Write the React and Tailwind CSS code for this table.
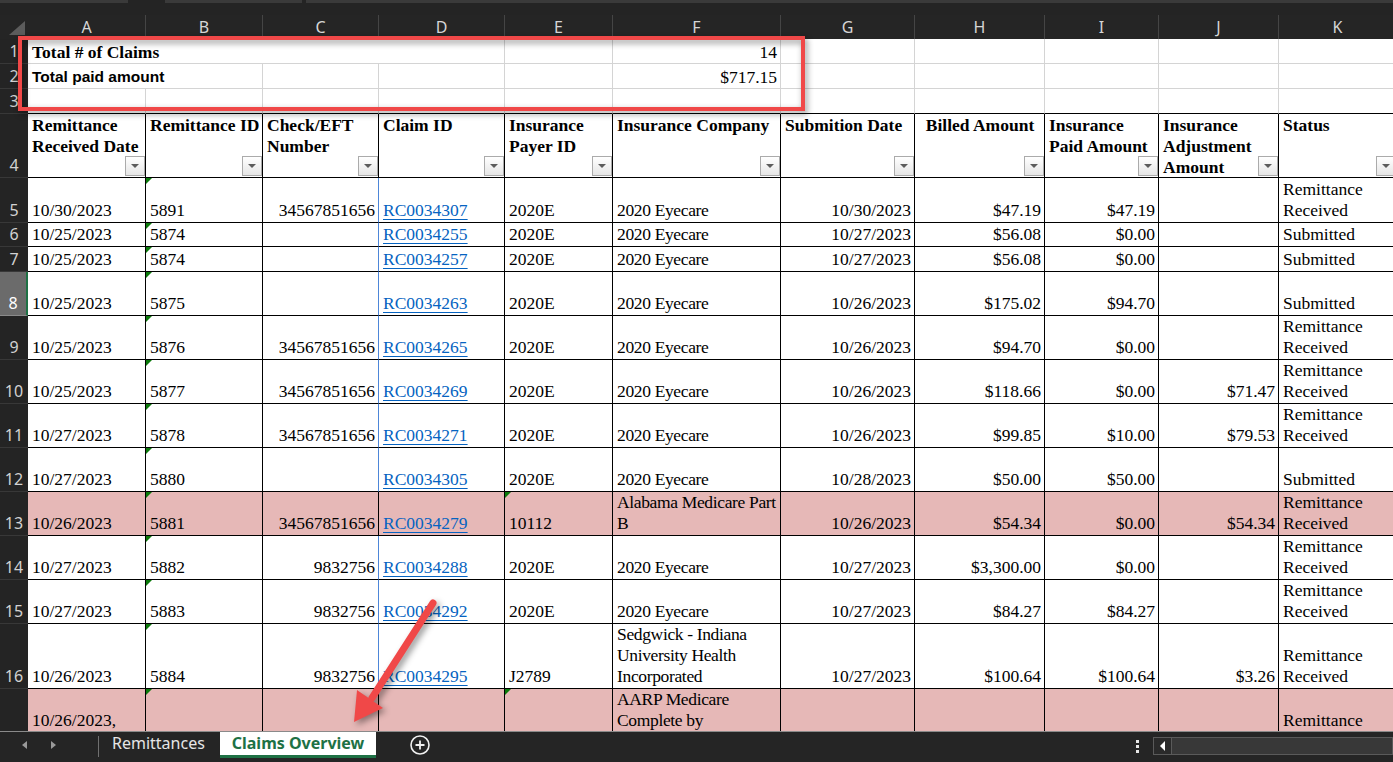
import React from 'react';

const W = ['w-[118px]', 'w-[117px]', 'w-[116px]', 'w-[126px]', 'w-[108px]', 'w-[168px]', 'w-[134px]', 'w-[130px]', 'w-[114px]', 'w-[120px]', 'w-[118px]'];
const ALIGN = ['l', 'l', 'r', 'link', 'l', 'l', 'r', 'r', 'r', 'r', 'l'];
const LETTERS = ['A', 'B', 'C', 'D', 'E', 'F', 'G', 'H', 'I', 'J', 'K'];

const SERIF = "font-['Liberation_Serif','Times_New_Roman',serif]";
const UI = "font-['Noto_Sans','Open_Sans',sans-serif]";

const headers = [
  ['Remittance', 'Received Date'],
  ['Remittance ID'],
  ['Check/EFT', 'Number'],
  ['Claim ID'],
  ['Insurance', 'Payer ID'],
  ['Insurance Company'],
  ['Submition Date'],
  ['Billed Amount'],
  ['Insurance', 'Paid Amount'],
  ['Insurance', 'Adjustment', 'Amount'],
  ['Status'],
];

const RR = ['Remittance', 'Received'];

// row 17 runs under the tab bar: null keeps a line's height without any text
const rows = [
  { n: 5, h: 'h-[45px]', blue: true, c: ['10/30/2023', '5891', '34567851656', 'RC0034307', '2020E', '2020 Eyecare', '10/30/2023', '$47.19', '$47.19', '', RR] },
  { n: 6, h: 'h-[24px]', blue: true, c: ['10/25/2023', '5874', '', 'RC0034255', '2020E', '2020 Eyecare', '10/27/2023', '$56.08', '$0.00', '', 'Submitted'] },
  { n: 7, h: 'h-[25px]', blue: true, c: ['10/25/2023', '5874', '', 'RC0034257', '2020E', '2020 Eyecare', '10/27/2023', '$56.08', '$0.00', '', 'Submitted'] },
  { n: 8, h: 'h-[44px]', blue: true, c: ['10/25/2023', '5875', '', 'RC0034263', '2020E', '2020 Eyecare', '10/26/2023', '$175.02', '$94.70', '', 'Submitted'] },
  { n: 9, h: 'h-[44px]', blue: true, c: ['10/25/2023', '5876', '34567851656', 'RC0034265', '2020E', '2020 Eyecare', '10/26/2023', '$94.70', '$0.00', '', RR] },
  { n: 10, h: 'h-[44px]', blue: true, c: ['10/25/2023', '5877', '34567851656', 'RC0034269', '2020E', '2020 Eyecare', '10/26/2023', '$118.66', '$0.00', '$71.47', RR] },
  { n: 11, h: 'h-[44px]', blue: true, c: ['10/27/2023', '5878', '34567851656', 'RC0034271', '2020E', '2020 Eyecare', '10/26/2023', '$99.85', '$10.00', '$79.53', RR] },
  { n: 12, h: 'h-[44px]', blue: true, c: ['10/27/2023', '5880', '', 'RC0034305', '2020E', '2020 Eyecare', '10/28/2023', '$50.00', '$50.00', '', 'Submitted'] },
  { n: 13, h: 'h-[44px]', pink: true, triE: true, c: ['10/26/2023', '5881', '34567851656', 'RC0034279', '10112', ['Alabama Medicare Part', 'B'], '10/26/2023', '$54.34', '$0.00', '$54.34', RR] },
  { n: 14, h: 'h-[44px]', blue: true, c: ['10/27/2023', '5882', '9832756', 'RC0034288', '2020E', '2020 Eyecare', '10/27/2023', '$3,300.00', '$0.00', '', RR] },
  { n: 15, h: 'h-[44px]', blue: true, c: ['10/27/2023', '5883', '9832756', 'RC0034292', '2020E', '2020 Eyecare', '10/27/2023', '$84.27', '$84.27', '', RR] },
  { n: 16, h: 'h-[65px]', blue: true, c: ['10/26/2023', '5884', '9832756', 'RC0034295', 'J2789', ['Sedgwick - Indiana', 'University Health', 'Incorporated'], '10/27/2023', '$100.64', '$100.64', '$3.26', RR] },
  { n: 17, hideNum: true, h: 'h-[65px]', pink: true, triE: true, c: [['10/26/2023,', null], '', '', '', '', ['AARP Medicare', 'Complete by', null], '', '', '', '', ['Remittance', null]] },
];

function Tri() {
  return <div className="absolute left-0 top-0 w-0 h-0 border-t-[6px] border-r-[6px] border-t-[#0b7a0b] border-r-transparent" />;
}

function FilterBtn() {
  return (
    <div className="absolute right-0 bottom-[1px] w-[20px] h-[20px] border border-[#ababab] bg-gradient-to-b from-white to-[#e6e6e6] flex items-center justify-center">
      <div className="w-0 h-0 border-l-[4px] border-r-[4px] border-t-[4px] border-l-transparent border-r-transparent border-t-[#5c5c5c]" />
    </div>
  );
}

function RowHead({ n, sel }) {
  return (
    <div
      className={`w-[28px] shrink-0 flex items-end justify-center pb-[1px] text-[16px] leading-[21px] border-b ${UI} ${
        sel ? 'bg-[#6b6b6b] text-white border-b-[#8a8a8a] border-r-2 border-r-[#1e7145]' : 'text-[#d2d2d2] border-b-[#383838]'
      }`}
    >
      {n}
    </div>
  );
}

function DataCell({ row, i, v }) {
  const lines = Array.isArray(v) ? v : v ? [v] : [];
  const align = ALIGN[i];
  const tri = i === 1 || (i === 4 && row.triE);
  return (
    <div
      className={`relative ${W[i]} shrink-0 border-r border-b border-b-black ${
        i === 2 && row.blue ? 'border-r-[#4d86d8]' : 'border-r-black'
      } ${row.pink ? 'bg-[#e6b8b7]' : 'bg-white'} flex flex-col justify-end pl-[4px] pr-[3px] pb-[1px] overflow-hidden ${
        align === 'r' ? 'items-end' : 'items-start'
      } ${i === 5 ? 'tracking-[-0.35px]' : ''}`}
    >
      {tri && <Tri />}
      {lines.map((l, k) =>
        l === null ? (
          <div key={k} className="h-[21px] shrink-0" />
        ) : (
          <div
            key={k}
            className={`whitespace-nowrap leading-[21px] ${align === 'link' ? 'text-[#0563c1] underline decoration-1 underline-offset-[3px]' : 'text-black'}`}
          >
            {l}
          </div>
        )
      )}
    </div>
  );
}

function GrayCell({ w, last, children, right }) {
  return (
    <div
      className={`${w} shrink-0 bg-white border-r border-r-[#d4d4d4] border-b ${last ? 'border-b-black' : 'border-b-[#d4d4d4]'} flex items-end pl-[4px] pr-[3px] leading-[22px] whitespace-nowrap ${
        right ? 'justify-end' : ''
      }`}
    >
      {children}
    </div>
  );
}

export default function App() {
  return (
    <div className={`relative w-[1393px] h-[762px] overflow-hidden bg-[#242424] flex flex-col ${SERIF} text-[17.5px]`}>
      {/* top strip */}
      <div className="h-[15px] shrink-0 flex items-start">
        <div className="h-[3px] w-[128px] bg-[#3a3a3a]" />
        <div className="h-[3px] w-[137px] ml-[37px] bg-[#3a3a3a]" />
        <div className="h-[3px] flex-1 ml-[4px] bg-[#3a3a3a]" />
      </div>

      {/* sheet */}
      <div className="flex-1 overflow-hidden flex flex-col">
        {/* column letters */}
        <div className={`flex h-[24px] shrink-0 bg-[#252525] ${UI}`}>
          <div className="w-[28px] shrink-0 relative">
            <svg width="28" height="24" className="absolute left-0 top-0">
              <polygon points="9,20 25,6 25,20" fill="#5c5c5c" />
            </svg>
          </div>
          {LETTERS.map((l, i) => (
            <div key={l} className={`${W[i]} shrink-0 border-r border-[#454545] flex items-center justify-center text-[16px] text-[#d6d6d6]`}>
              {l}
            </div>
          ))}
        </div>

        {/* row 1 */}
        <div className="flex h-[25px] shrink-0">
          <RowHead n={1} />
          <GrayCell w="w-[477px]">
            <span className="font-bold text-black">Total # of Claims</span>
          </GrayCell>
          <GrayCell w={W[4]} />
          <GrayCell w={W[5]} right>
            <span className="text-black">14</span>
          </GrayCell>
          {[6, 7, 8, 9, 10].map((i) => (
            <GrayCell key={i} w={W[i]} />
          ))}
        </div>

        {/* row 2 */}
        <div className="flex h-[25px] shrink-0">
          <RowHead n={2} />
          <GrayCell w="w-[235px]">
            <span className="font-bold text-black text-[15.5px] font-['Liberation_Sans',Arial,sans-serif]">Total paid amount</span>
          </GrayCell>
          <GrayCell w={W[2]} />
          <GrayCell w={W[3]} />
          <GrayCell w={W[4]} />
          <GrayCell w={W[5]} right>
            <span className="text-black">$717.15</span>
          </GrayCell>
          {[6, 7, 8, 9, 10].map((i) => (
            <GrayCell key={i} w={W[i]} />
          ))}
        </div>

        {/* row 3 */}
        <div className="flex h-[25px] shrink-0">
          <RowHead n={3} />
          {W.map((w, i) => (
            <GrayCell key={i} w={w} last />
          ))}
        </div>

        {/* row 4 table header */}
        <div className="flex h-[64px] shrink-0">
          <RowHead n={4} />
          {headers.map((h, i) => (
            <div
              key={i}
              className={`relative ${W[i]} shrink-0 bg-white border-r border-b border-black pl-[4px] pr-[3px] pt-[1px] flex flex-col font-bold text-black leading-[21px] ${
                i === 7 ? 'items-center' : 'items-start'
              }`}
            >
              {h.map((l, k) => (
                <div key={k} className="whitespace-nowrap">
                  {l}
                </div>
              ))}
              <FilterBtn />
            </div>
          ))}
        </div>

        {rows.map((row) => (
          <div key={row.n} className={`flex ${row.h} shrink-0`}>
            <RowHead n={row.hideNum ? null : row.n} sel={row.n === 8} />
            {row.c.map((v, i) => (
              <DataCell key={i} row={row} i={i} v={v} />
            ))}
          </div>
        ))}
      </div>

      {/* sheet tabs */}
      <div className={`h-[31px] shrink-0 bg-[#252525] border-t border-[#8a8a8a] flex items-start ${UI}`}>
        <div className="w-[98px] h-[26px] flex items-center">
          <div className="ml-[22px] w-0 h-0 border-y-[4px] border-y-transparent border-r-[5px] border-r-[#9a9a9a]" />
          <div className="ml-[24px] w-0 h-0 border-y-[4px] border-y-transparent border-l-[5px] border-l-[#9a9a9a]" />
        </div>
        <div className="mt-[4px] w-px h-[21px] bg-[#707070]" />
        <div className="w-[121px] h-[21px] flex items-center pl-[13px] text-[16px] text-[#e6e6e6]">Remittances</div>
        <div className="w-[156px] h-[26px] bg-white border-b-[3px] border-[#1e7145] flex items-center justify-center pb-[2px] text-[16px] font-bold text-[#1e7145]">
          Claims Overview
        </div>
        <div className="ml-[34px] h-[26px] flex items-center">
          <svg width="20" height="20" viewBox="0 0 20 20">
            <circle cx="10" cy="10" r="9" fill="none" stroke="#f0f0f0" strokeWidth="1.6" />
            <path d="M10 5.5v9M5.5 10h9" stroke="#f0f0f0" strokeWidth="1.8" />
          </svg>
        </div>
        <div className="flex-1" />
        <div className="h-[28px] flex flex-col items-center justify-center gap-[2px] mr-[14px]">
          <div className="w-[3px] h-[3px] bg-[#e6e6e6]" />
          <div className="w-[3px] h-[3px] bg-[#e6e6e6]" />
          <div className="w-[3px] h-[3px] bg-[#e6e6e6]" />
        </div>
        <div className="mt-[5px] w-[240px] h-[18px] flex border border-[#5a5a5a] bg-[#383838]">
          <div className="w-[18px] h-full border-r border-[#5a5a5a] bg-[#2a2a2a] flex items-center justify-center">
            <div className="w-0 h-0 border-y-[5px] border-y-transparent border-r-[5px] border-r-white" />
          </div>
        </div>
      </div>

      {/* annotation box */}
      <div className="absolute left-[18px] top-[36px] w-[787px] h-[75px] border-[4px] border-[#f04848] drop-shadow-[2px_3px_3px_rgba(0,0,0,0.45)]" />

      {/* annotation arrow */}
      <svg className="absolute left-0 top-0 pointer-events-none drop-shadow-[3px_3px_3px_rgba(0,0,0,0.4)]" width="1393" height="762">
        <line x1="433" y1="603" x2="372" y2="698" stroke="#f04848" strokeWidth="7" strokeLinecap="round" />
        <polygon points="354,722 383,708 357,690" fill="#f04848" />
      </svg>
    </div>
  );
}
